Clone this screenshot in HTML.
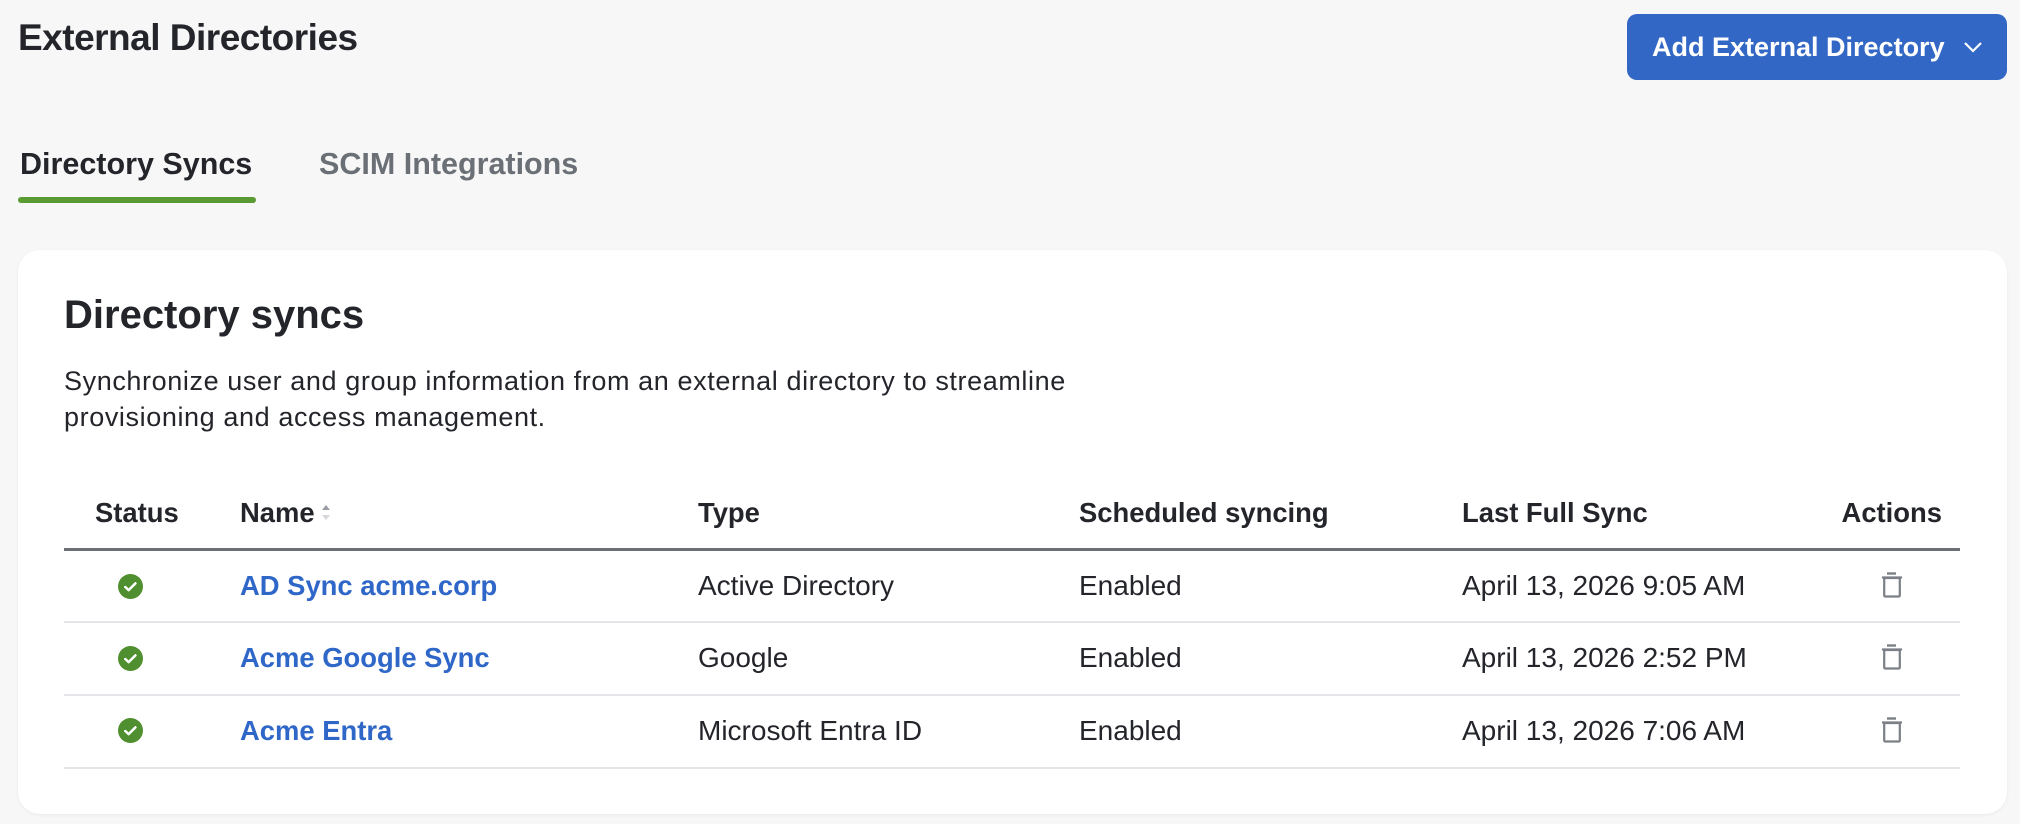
<!DOCTYPE html>
<html><head><meta charset="utf-8"><style>
*{box-sizing:border-box;margin:0;padding:0}
body{width:2020px;height:824px;background:#f7f7f7;font-family:"Liberation Sans",Arial,sans-serif;color:#23252a;position:relative;overflow:hidden}
.abs{position:absolute;white-space:nowrap}
h1{position:absolute;left:18px;top:17px;font-size:37px;font-weight:bold;letter-spacing:-0.5px}
.btn{position:absolute;left:1627px;top:14px;width:380px;height:66px;background:#3267c6;border-radius:10px;color:#fff;font-weight:bold;font-size:27px;line-height:66px;padding-left:25px}
.tab{position:absolute;top:147px;font-size:30.5px;font-weight:bold}
.card{position:absolute;left:18px;top:250px;width:1989px;height:564px;background:#fff;border-radius:22px;box-shadow:0 1px 3px rgba(0,0,0,.06)}
.row{position:absolute;left:64px;width:1896px;height:2px;background:#e4e5e8}
.cell{position:absolute;font-size:28px;white-space:nowrap;transform:translateY(-50%)}
.hd{font-weight:bold;font-size:27.4px}
.lnk{color:#2f67c8;font-weight:bold;font-size:27.4px}
</style></head><body>
<h1>External Directories</h1>
<div class="btn">Add External Directory<svg style="position:absolute;left:336px;top:27px" width="20" height="12" viewBox="0 0 20 12"><path d="M2 2l8 8 8-8" fill="none" stroke="#fff" stroke-width="2.2"/></svg></div>
<div class="tab" style="left:20px;color:#23252a">Directory Syncs</div>
<div class="tab" style="left:319px;color:#6b6f76">SCIM Integrations</div>
<div class="abs" style="left:18px;top:197px;width:238px;height:6px;background:#5a9a32;border-radius:3px"></div>
<div class="card"></div>
<div class="abs" style="left:64px;top:293px;font-size:40px;font-weight:bold">Directory syncs</div>
<div class="abs" style="left:64px;top:363px;font-size:27px;letter-spacing:0.6px;line-height:36px">Synchronize user and group information from an external directory to streamline<br>provisioning and access management.</div>

<div class="cell hd" style="left:95px;top:513px">Status</div>
<div class="cell hd" style="left:240px;top:513px">Name<svg style="margin-left:6px;vertical-align:-2px" width="10" height="22" viewBox="0 0 10 22"><path d="M1 8l4-5 4 5z" fill="#9a9da3"/><path d="M1 13l4 5 4-5z" fill="#d5d7da"/></svg></div>
<div class="cell hd" style="left:698px;top:513px">Type</div>
<div class="cell hd" style="left:1079px;top:513px">Scheduled syncing</div>
<div class="cell hd" style="left:1462px;top:513px">Last Full Sync</div>
<div class="cell hd" style="right:78px;top:513px">Actions</div>
<div class="row" style="top:548px;height:3px;background:#6b6f76"></div>

<div class="row" style="top:621px"></div>
<div class="row" style="top:694px"></div>
<div class="row" style="top:767px"></div>

<svg class="abs" style="left:118px;top:574px" width="25" height="25" viewBox="0 0 24 24"><circle cx="12" cy="12" r="12" fill="#4f8f2f"/><path d="M7 12.5l3.2 3 6.5-6.5" fill="none" stroke="#fff" stroke-width="2.4" stroke-linecap="round" stroke-linejoin="round"/></svg>
<svg class="abs" style="left:118px;top:646px" width="25" height="25" viewBox="0 0 24 24"><circle cx="12" cy="12" r="12" fill="#4f8f2f"/><path d="M7 12.5l3.2 3 6.5-6.5" fill="none" stroke="#fff" stroke-width="2.4" stroke-linecap="round" stroke-linejoin="round"/></svg>
<svg class="abs" style="left:118px;top:718px" width="25" height="25" viewBox="0 0 24 24"><circle cx="12" cy="12" r="12" fill="#4f8f2f"/><path d="M7 12.5l3.2 3 6.5-6.5" fill="none" stroke="#fff" stroke-width="2.4" stroke-linecap="round" stroke-linejoin="round"/></svg>

<div class="cell lnk" style="left:240px;top:586px">AD Sync acme.corp</div>
<div class="cell lnk" style="left:240px;top:658px">Acme Google Sync</div>
<div class="cell lnk" style="left:240px;top:731px">Acme Entra</div>
<div class="cell" style="left:698px;top:586px">Active Directory</div>
<div class="cell" style="left:698px;top:658px">Google</div>
<div class="cell" style="left:698px;top:731px">Microsoft Entra ID</div>
<div class="cell" style="left:1079px;top:586px">Enabled</div>
<div class="cell" style="left:1079px;top:658px">Enabled</div>
<div class="cell" style="left:1079px;top:731px">Enabled</div>
<div class="cell" style="left:1462px;top:586px">April 13, 2026 9:05 AM</div>
<div class="cell" style="left:1462px;top:658px">April 13, 2026 2:52 PM</div>
<div class="cell" style="left:1462px;top:731px">April 13, 2026 7:06 AM</div>

<svg class="abs" style="left:1880px;top:571px" width="24" height="28" viewBox="0 0 24 28"><path d="M7 2.5h9" stroke="#7b7f86" stroke-width="2.4"/><path d="M2 6.5h20" stroke="#7b7f86" stroke-width="2.2"/><rect x="4.2" y="7" width="15.6" height="18.5" rx="1" fill="none" stroke="#7b7f86" stroke-width="2.2"/></svg>
<svg class="abs" style="left:1880px;top:643px" width="24" height="28" viewBox="0 0 24 28"><path d="M7 2.5h9" stroke="#7b7f86" stroke-width="2.4"/><path d="M2 6.5h20" stroke="#7b7f86" stroke-width="2.2"/><rect x="4.2" y="7" width="15.6" height="18.5" rx="1" fill="none" stroke="#7b7f86" stroke-width="2.2"/></svg>
<svg class="abs" style="left:1880px;top:716px" width="24" height="28" viewBox="0 0 24 28"><path d="M7 2.5h9" stroke="#7b7f86" stroke-width="2.4"/><path d="M2 6.5h20" stroke="#7b7f86" stroke-width="2.2"/><rect x="4.2" y="7" width="15.6" height="18.5" rx="1" fill="none" stroke="#7b7f86" stroke-width="2.2"/></svg>
</body></html>
